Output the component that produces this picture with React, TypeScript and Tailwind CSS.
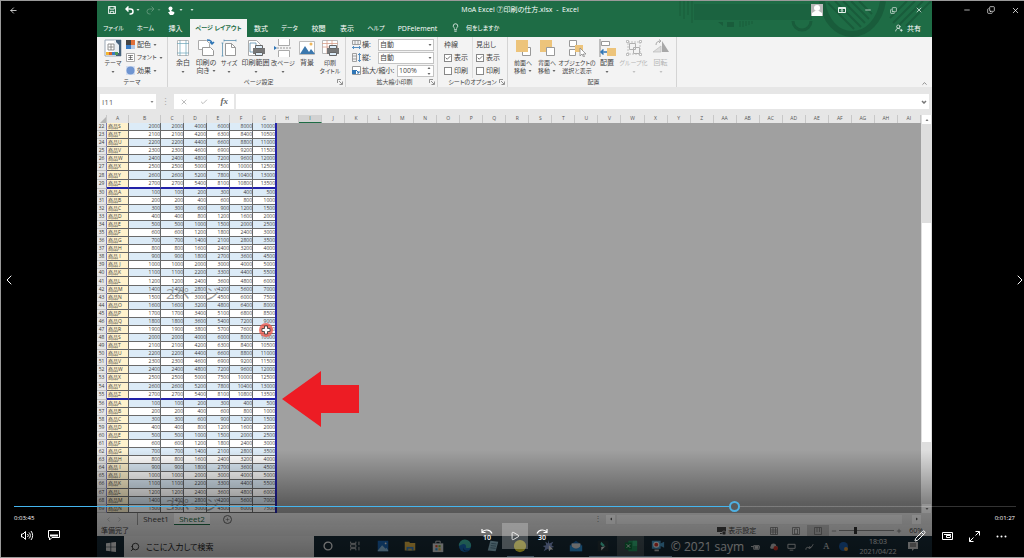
import { useState, type ReactNode } from 'react'
import clsx from 'clsx'
import {
  ArrowLeft,
  Check,
  ChevronLeft,
  ChevronRight,
  ChevronUp,
  Copy,
  Lightbulb,
  Minus,
  Pencil,
  Play,
  Plus,
  Search,
  UserRoundPlus,
  X,
} from 'lucide-react'

const tabs = [
  { name: 'ファイル', width: 'w-[33px]', small: true },
  { name: 'ホーム', width: 'w-[31px]', small: true },
  { name: '挿入', width: 'w-[29px]' },
  { name: 'ページ レイアウト', width: 'w-[57px]', active: true, small: true },
  { name: '数式', width: 'w-[28px]' },
  { name: 'データ', width: 'w-[29px]', small: true },
  { name: '校閲', width: 'w-[29px]' },
  { name: '表示', width: 'w-[28px]' },
  { name: 'ヘルプ', width: 'w-[30px]', small: true },
  { name: 'PDFelement', width: 'w-[53px]' },
]

const dataColumns = ['A', 'B', 'C', 'D', 'E', 'F', 'G']
const emptyColumns = [
  'H', 'I', 'J', 'K', 'L', 'M', 'N', 'O', 'P', 'Q', 'R', 'S', 'T', 'U',
  'V', 'W', 'X', 'Y', 'Z', 'AA', 'AB', 'AC', 'AD', 'AE', 'AF', 'AG', 'AH', 'AI',
]

// rows 22-69, the product list restarts at A on row 30 and row 56
const rows = Array.from({ length: 48 }, (_, i) => {
  const row = 22 + i
  const index = (row - 30 + 26) % 26
  const letter = String.fromCharCode(65 + index)
  const base = (index < 12 ? index + 1 : index + 2) * 100
  return {
    row,
    name: '商品' + (letter === 'I' || letter === 'J' ? ' ' : '') + letter,
    values: [base, base, base * 2, base * 3, base * 4, base * 5],
    last: letter === 'Z',
  }
})

function Caret({ className = '' }: { className?: string }) {
  return (
    <svg viewBox="0 0 4 2" className={clsx('h-[2px] w-[4px] shrink-0 fill-current opacity-80', className)}>
      <path d="M.5 0h3L2 2z" />
    </svg>
  )
}

function Launcher() {
  return (
    <svg viewBox="0 0 6 6" className="absolute right-[2px] bottom-[2px] size-[6px] fill-none stroke-[#777]">
      <path d="M.5 4V.5H4M2 2l3 3M5.5 2.5v3h-3" strokeWidth=".8" />
    </svg>
  )
}

function Group({ label, launcher, className, children }: { label: string; launcher?: boolean; className?: string; children: ReactNode }) {
  return (
    <section className={clsx('relative flex shrink-0 flex-col border-r border-[#d4d4d4]', className)}>
      <div className="flex h-[41px] shrink-0">{children}</div>
      <p className="text-center text-[6px] leading-[8px]">{label}</p>
      {launcher && <Launcher />}
    </section>
  )
}

type BigButtonProps = {
  lines: string[]
  caret?: boolean
  small?: boolean
  width: string
  disabled?: boolean
  children: ReactNode
}

function BigButton({ lines, caret, small, width, disabled, children }: BigButtonProps) {
  return (
    <button
      disabled={disabled}
      className={clsx('flex shrink-0 flex-col items-center whitespace-nowrap', width, small && 'text-[6px]', disabled && 'text-[#b5b5b5]')}
    >
      <svg viewBox="0 0 18 18" className="mt-[2px] mb-[2px] size-[18px] shrink-0" fill="none">
        {children}
      </svg>
      <span className="leading-[8px]">{lines[0]}</span>
      {lines[1] ? (
        <span className="flex items-center gap-[2px] leading-[8px]">
          {lines[1]}
          {caret && <Caret />}
        </span>
      ) : (
        caret && <Caret className="mt-[4px]" />
      )}
    </button>
  )
}

function SmallButton({ label, small, children }: { label: string; small?: boolean; children: ReactNode }) {
  return (
    <button className={clsx('flex h-[13px] items-center gap-[2px] whitespace-nowrap', small && 'text-[6px]')}>
      <svg viewBox="0 0 9 9" className="size-[9px]" fill="none">
        {children}
      </svg>
      {label}
      <Caret />
    </button>
  )
}

function CheckOption({ id, label, defaultChecked }: { id: string; label: string; defaultChecked?: boolean }) {
  return (
    <div className="flex h-[13px] items-center gap-[2px]">
      <span className="relative flex size-[8px]">
        <input id={id} type="checkbox" defaultChecked={defaultChecked} className="peer size-[8px] appearance-none border border-[#888] bg-white" />
        <Check className="absolute top-px left-px hidden size-[6px] text-[#444] peer-checked:block" strokeWidth={3} />
      </span>
      <label htmlFor={id}>{label}</label>
    </div>
  )
}

function ScaleIcon({ vertical }: { vertical?: boolean }) {
  return (
    <svg viewBox="0 0 9 9" className={clsx('size-[9px] shrink-0', vertical && '-rotate-90')} fill="none">
      <path d="M.5.5h8v4h-8zM3 .5v4M6 .5v4" stroke="#8a8a8a" strokeWidth=".8" />
      <path d="M.5 7.5h8M2 6 .5 7.5 2 9M7 6l1.5 1.5L7 9" stroke="#2f75b5" strokeWidth=".8" />
    </svg>
  )
}

function TitleBar() {
  return (
    <header className="relative h-[36px] shrink-0 overflow-hidden bg-[#1e6c45] text-white">
      <svg viewBox="0 0 260 36" className="absolute top-0 right-0 h-[36px] w-[260px]" fill="none" stroke="#195c3b">
        <path d="M8 0v15M12 0v18M16 0v14M20 0v22" strokeWidth="1" />
        <path d="M22 3h118v16H22z" fill="#1b6340" stroke="none" />
        <path d="M121 20a9 9 0 0 0 18 0" strokeWidth="3" />
        <path d="M55 21h7v5h-7zM46 21l5 4v-4z" fill="#195c3b" stroke="none" />
        <path d="M68 20v6M71 20v6M74 20v5M77 20v4M80 20v3" strokeWidth="1" />
        <path d="M150 0c3 20 15 33 30 33s28-13 31-33" strokeWidth="6" />
        <path d="M156 2l26 26M163 0l26 26M171 0l22 22M179 0l18 18M187 0l13 13" strokeWidth="2" />
        <path d="M218 17 235 0M221 22 243 0M226 25 251 0M234 25 259 0" strokeWidth="2" />
      </svg>
      <div className="relative flex h-[18px] items-center">
        <div className="flex flex-1 items-center gap-[6px] pl-[11px]">
          <button aria-label="save">
            <svg viewBox="0 0 9 9" className="size-[8px]" fill="none" stroke="#fff">
              <path d="M.5.5h8v8h-8zM2 .5v3h5v-3M2.5 8.5V6h4v2.5" />
            </svg>
          </button>
          <button aria-label="undo" className="ml-[3px] flex items-center gap-[2px]">
            <svg viewBox="0 0 9 9" className="size-[9px]" fill="none" stroke="#fff" strokeWidth="1.5">
              <path d="M3.5.5 1 3l2.5 2.5M1 3h4.500a2.500 2.500 0 0 1 0 5H4.500" />
            </svg>
            <Caret />
          </button>
          <button aria-label="redo" className="flex items-center gap-[2px] text-[#5d9577]">
            <svg viewBox="0 0 9 9" className="size-[9px]" fill="none" stroke="currentColor">
              <path d="M5.500.5 8 3 5.500 5.500M8 3H3.500a2.500 2.500 0 0 0 0 5h1" />
            </svg>
            <Caret />
          </button>
          <button aria-label="touch" className="flex items-center gap-[4px]">
            <svg viewBox="0 0 8 9" className="h-[9px] w-[8px]">
              <circle cx="3.5" cy="2.5" r="2" fill="#fff" />
              <path d="M2.700 2h1.600v3l3 1v1.500L6 9H3L1 6h1.700z" fill="#fff" />
            </svg>
            <Caret />
          </button>
          <Caret className="ml-[1px]" />
        </div>
        <h1 className="text-[7px] leading-[10px] whitespace-pre">MoA Excel ⑦印刷の仕方.xlsx  -  Excel</h1>
        <div className="flex flex-1 items-center justify-end">
          <span className="mr-[15px] flex size-[12px] items-end justify-center bg-[#b9b9b9]">
            <svg viewBox="0 0 12 12" className="size-[12px] fill-white">
              <circle cx="6" cy="4" r="3" />
              <path d="M1 12V9l3-2h4l3 2v3z" />
            </svg>
          </span>
          <svg viewBox="0 0 8 6" className="mr-[18px] h-[6px] w-[8px]" fill="none" stroke="#fff" strokeWidth=".9">
            <path d="M.5.5h7v5h-7zM.5 1.500h7M4 5V2.500M3 3.500l1-1 1 1" />
          </svg>
          <Minus className="mr-[18px] size-[8px]" />
          <Copy className="mr-[18px] size-[7px] -scale-x-100 rotate-180" />
          <X className="mr-[9px] size-[8px]" />
        </div>
      </div>
      <nav className="relative flex h-[18px] items-stretch">
        {tabs.map((tab) => (
          <button
            key={tab.name}
            className={clsx(
              'flex shrink-0 items-center justify-center whitespace-nowrap',
              tab.width,
              tab.small && 'text-[6px]',
              tab.active && 'bg-[#f3f3f3] font-semibold text-[#1e6c45]',
            )}
          >
            {tab.name}
          </button>
        ))}
        <Lightbulb className="mt-[4px] ml-[7px] size-[9px]" />
        <button className="ml-[6px] text-[6px] whitespace-nowrap">何をしますか</button>
        <button className="mr-[11px] ml-auto flex items-center gap-[4px]">
          <UserRoundPlus className="size-[8px]" />
          共有
        </button>
      </nav>
    </header>
  )
}

function Ribbon() {
  return (
    <div className="relative flex h-[50px] shrink-0 bg-[#f3f3f3] text-[#444]">
      <Group label="テーマ" className="w-[71px]">
        <div className="ml-[4px] flex w-[24px]">
          <BigButton lines={['テーマ']} caret small width="w-[24px]">
            <path d="M1 1h16v16H1z" fill="#fff" stroke="#9aa7b5" />
            <path d="M12 1h5v16h-5z" fill="#44617c" />
            <path d="m10 1 5 5v8h-5z" fill="#e9eef3" />
            <path d="M4 5h6M4 11h6M7 5v6M4.500 8h5M4 5v6M10 5v6" stroke="#777" strokeWidth=".8" />
            <path d="M2 13h3v3H2z" fill="#f2b632" />
            <path d="M5 13h3v3H5z" fill="#d9622b" />
            <path d="M8 13h3v3H8z" fill="#3b7cc4" />
            <path d="M11 13h3v3h-3z" fill="#4e9a57" />
          </BigButton>
        </div>
        <div className="ml-[1px] flex flex-col pt-[1px]">
          <SmallButton label="配色">
            <path d="M0 0h5v5H0z" fill="#444" />
            <path d="M5 0h4v5H5z" fill="#e0703a" />
            <path d="M0 5h5v4H0z" fill="#3b7cc4" />
            <path d="M5 5h4v4H5z" fill="#b4c8e4" />
          </SmallButton>
          <SmallButton label="フォント" small>
            <path d="M.5.5h8v8h-8z" fill="#fff" stroke="#aaa" />
            <path d="M2 2.500h5M2 6.500h5M4.500 2.500v4M2.500 4.500h4" stroke="#555" strokeWidth=".7" />
          </SmallButton>
          <SmallButton label="効果">
            <path d="M0 0h9v9H0z" fill="#d5dff0" />
            <circle cx="4.5" cy="4.5" r="4" fill="#6f95d1" />
          </SmallButton>
        </div>
      </Group>

      <Group label="ページ設定" launcher className="w-[178px] pl-[4px]">
        <BigButton lines={['余白']} caret width="w-[22px]">
          <path d="M3.500 1.500h11v15h-11z" fill="#fff" stroke="#bbb" />
          <path d="M6 1v16M12 1v16M3 4.500h12M3 14h12" stroke="#6ba5b8" strokeWidth=".7" />
        </BigButton>
        <BigButton lines={['印刷の', '向き']} caret width="w-[24px]">
          <path d="M1.500 1.500h8l3 3v6h-11z" fill="#fff" stroke="#aaa" />
          <path d="M5.500 8.500h8l3 3v5h-11z" fill="#fff" stroke="#999" />
          <path d="M10 1c4 0 5 1 5 4M13 3l2 2 2-2" stroke="#2f75b5" strokeWidth="1.5" />
        </BigButton>
        <BigButton lines={['サイズ']} caret small width="w-[22px]">
          <path d="M5.500 4.500h6l4 4v8h-10z" fill="#fff" stroke="#999" />
          <path d="M11.500 4.500v4h4" stroke="#999" />
          <path d="M4 1.500h12M2.500 4v13M4 .5v2M16 .5v2M1.500 4h2M1.500 17h2" stroke="#5a90b0" strokeWidth=".8" />
        </BigButton>
        <BigButton lines={['印刷範囲']} caret width="w-[31px]">
          <path d="M1.500 1.500h8l4 4v11h-12z" fill="#fff" stroke="#aaa" />
          <path d="M3 4h6v9H3z" stroke="#5a90b0" strokeWidth=".8" />
          <path d="M6 9h12v6H6z" fill="#777" />
          <path d="M8.500 6.500h7v3h-7zM8.500 13.500h7v3h-7z" fill="#dcecf8" stroke="#666" />
        </BigButton>
        <BigButton lines={['改ページ']} caret small width="w-[24px]">
          <path d="M4.500 0v6.500h11V0M4.500 18v-6.500h11V18" fill="#fff" stroke="#aaa" />
          <path d="M3 9h15" stroke="#999" strokeDasharray="2 1" />
          <path d="m0 7 3 2-3 2z" fill="#2f75b5" />
        </BigButton>
        <BigButton lines={['背景']} width="w-[24px]">
          <path d="M1.500 2.500h15v13h-15z" fill="#fff" stroke="#bbb" />
          <circle cx="13" cy="5" r="1.5" fill="#efb75b" />
          <path d="m2 15 5-8 4 6 2-3 4 5z" fill="#3b78ae" />
        </BigButton>
        <BigButton lines={['印刷', 'タイトル']} small width="w-[22px]">
          <path d="M1.500 1.500h15v13h-15z" fill="#fff" stroke="#bbb" />
          <path d="M1 4.500h16M1 8h16M6 1v14M11 1v14" stroke="#d8a08a" strokeWidth=".8" />
          <path d="M6 9h12v6H6z" fill="#777" />
          <path d="M8.500 6.500h7v3h-7zM8.500 13.500h7v3h-7z" fill="#dcecf8" stroke="#666" />
        </BigButton>
      </Group>

      <Group label="拡大縮小印刷" launcher className="w-[92px] pl-[6px]">
        <div className="flex w-[82px] flex-col pt-[1px]">
          <div className="flex h-[13px] items-center gap-[1px]">
            <ScaleIcon />
            <label htmlFor="fit-width" className="w-[15px]">横:</label>
            <span className="relative flex flex-1 items-center">
              <select id="fit-width" className="h-[12px] w-full appearance-none border border-[#c4c4c4] bg-white pl-px leading-[10px]">
                <option>自動</option>
              </select>
              <Caret className="absolute right-[2px]" />
            </span>
          </div>
          <div className="flex h-[13px] items-center gap-[1px]">
            <ScaleIcon vertical />
            <label htmlFor="fit-height" className="w-[15px]">縦:</label>
            <span className="relative flex flex-1 items-center">
              <select id="fit-height" className="h-[12px] w-full appearance-none border border-[#c4c4c4] bg-white pl-px leading-[10px]">
                <option>自動</option>
              </select>
              <Caret className="absolute right-[2px]" />
            </span>
          </div>
          <div className="flex h-[13px] items-center gap-[1px]">
            <svg viewBox="0 0 9 9" className="size-[9px] shrink-0" fill="none">
              <path d="M.5.5h8v8h-8z" fill="#fff" stroke="#999" />
              <path d="M0 4h4v4H0z" fill="#2f75b5" />
              <path d="m4 4 3 3M7 5v2H5" stroke="#2f75b5" />
            </svg>
            <label htmlFor="scale" className="w-[34px] whitespace-nowrap">拡大/縮小:</label>
            <span className="relative flex flex-1 items-center">
              <input id="scale" defaultValue="100%" className="h-[12px] w-full border border-[#c4c4c4] bg-white pl-px text-[7px]" />
              <span className="absolute right-[3px] flex flex-col gap-[4px]">
                <Caret className="rotate-180" />
                <Caret />
              </span>
            </span>
          </div>
        </div>
      </Group>

      <Group label="シートのオプション" launcher className="w-[70px]">
        <fieldset aria-label="枠線" className="ml-[6px] w-[29px] shrink-0 border-r border-[#ddd] pt-[1px]">
          <p className="flex h-[13px] items-center">枠線</p>
          <CheckOption id="lines-view" label="表示" defaultChecked />
          <CheckOption id="lines-print" label="印刷" />
        </fieldset>
        <fieldset aria-label="見出し" className="pt-[1px] pl-[3px] whitespace-nowrap">
          <p className="flex h-[13px] items-center">見出し</p>
          <CheckOption id="heads-view" label="表示" defaultChecked />
          <CheckOption id="heads-print" label="印刷" />
        </fieldset>
      </Group>

      <Group label="配置" className="w-[169px] pl-[3px]">
        <BigButton lines={['前面へ', '移動']} caret small width="w-[24px]">
          <path d="M8.500 8.500h8v8h-8z" fill="#fff" stroke="#999" />
          <path d="M2 1h12v12H2z" fill="#edc47b" />
        </BigButton>
        <BigButton lines={['背面へ', '移動']} caret small width="w-[24px]">
          <path d="M2 1h12v12H2z" fill="#edc47b" />
          <path d="M8.500 8.500h8v8h-8z" fill="#fff" stroke="#999" />
        </BigButton>
        <BigButton lines={['オブジェクトの', '選択と表示']} small width="w-[36px]">
          <path d="M1.500 1.500h7v6h-7zM1.500 10.500h6v6h-6z" fill="#fff" stroke="#999" />
          <path d="M7 6h8v7H7z" fill="#edc47b" />
          <path d="M12 9v8l2-2 1.500 3 1-.5-1.200-2.500H18z" fill="#fff" stroke="#888" strokeWidth=".8" />
        </BigButton>
        <BigButton lines={['配置']} caret width="w-[24px]">
          <path d="M2 0v18" stroke="#888" />
          <path d="M3.500 2.500h8v4h-8z" fill="#fff" stroke="#999" />
          <path d="M9 9h9v8H9z" fill="#edc47b" />
          <path d="M9 13H3M5.500 10.500 3 13l2.500 2.500" stroke="#2f75b5" strokeWidth="1.5" />
        </BigButton>
        <BigButton lines={['グループ化']} caret small width="w-[29px]" disabled>
          <path d="M3 3h12v12H3z" stroke="#c0c0c0" strokeDasharray="2 1" />
          <path d="M4.500 4.500h6v6h-6zM8.500 8.500h6v6h-6z" fill="#f3f3f3" stroke="#b0b0b0" />
          <path d="M1.500 1.500h2v2h-2zM14.500 1.500h2v2h-2zM1.500 14.500h2v2h-2zM14.500 14.500h2v2h-2z" fill="#fff" stroke="#b0b0b0" strokeWidth=".8" />
        </BigButton>
        <BigButton lines={['回転']} caret width="w-[25px]" disabled>
          <path d="m1 13 8-6v6z" fill="#ddd" stroke="#bbb" strokeWidth=".7" />
          <path d="m10 2 7 11h-7z" fill="#a8a8a8" />
          <path d="M4 6c0-3 2-4 5-4M7 .5 9 2 7 4" stroke="#aaa" />
        </BigButton>
      </Group>
      <ChevronUp className="absolute right-[4px] bottom-0 size-[7px]" />
    </div>
  )
}

function FormulaBar() {
  return (
    <div className="flex h-[28px] shrink-0 items-start bg-[#e6e6e6] px-[3px] pt-[7px] text-[#666]">
      <span className="relative flex h-[15px] w-[56px] items-center">
        <input aria-label="名前ボックス" defaultValue="I11" className="h-full w-full bg-white pl-[2px] text-[8px]" />
        <Caret className="absolute right-[2px]" />
      </span>
      <span className="flex h-[15px] w-[18px] items-center justify-center text-[9px] text-[#aaa]">⋮</span>
      <div className="flex h-[15px] w-[60px] items-center justify-around bg-white">
        <X className="size-[8px] text-[#999]" />
        <Check className="size-[8px] text-[#999]" />
        <i className="font-['Liberation_Serif',serif] text-[9px] font-bold">fx</i>
      </div>
      <span className="relative ml-[2px] flex h-[15px] flex-1 items-center">
        <input aria-label="数式バー" className="h-full w-full bg-white" />
        <svg viewBox="0 0 6 4" className="absolute right-[2px] h-[4px] w-[6px]" fill="none" stroke="#777" strokeWidth="1.5">
          <path d="m1 1 2 2 2-2" />
        </svg>
      </span>
    </div>
  )
}

function Sheet() {
  return (
    <div className="flex min-h-0 flex-1 bg-[#e6e6e6] text-[5px]">
      <div className="flex min-w-0 flex-1 flex-col">
        <div className="flex h-[8px] shrink-0 leading-[7px] text-[#555]">
          <span className="flex w-[10px] items-end justify-end border-r border-[#c8c8c8]">
            <svg viewBox="0 0 6 6" className="size-[6px] fill-[#b5b5b5]">
              <path d="M6 0v6H0z" />
            </svg>
          </span>
          {dataColumns.map((name) => (
            <span
              key={name}
              className={clsx('border-r border-[#c8c8c8] text-center', name === 'A' ? 'w-[22px]' : name === 'B' ? 'w-[32px]' : 'w-[23px]')}
            >
              {name}
            </span>
          ))}
          {emptyColumns.map((name) => (
            <span
              key={name}
              className={clsx(
                'min-w-0 flex-1 border-r border-[#c8c8c8] text-center',
                name === 'I' && 'border-b border-b-[#1e6c45] bg-[#d2d2d2] text-[#1e6c45]',
              )}
            >
              {name}
            </span>
          ))}
        </div>
        <div className="relative min-h-0 flex-1 overflow-hidden bg-[#a0a0a0]">
          <table className="h-[390px] w-[180px] table-fixed border-separate border-spacing-0 border-r-2 border-[#2222a8] leading-[7px] text-[#3c3c3c]">
            <colgroup>
              <col className="w-[10px]" />
              <col className="w-[22px]" />
              <col className="w-[32px]" />
              <col className="w-[23px]" />
              <col className="w-[23px]" />
              <col className="w-[23px]" />
              <col className="w-[23px]" />
              <col className="w-[22px]" />
            </colgroup>
            <tbody>
              {rows.map((r) => (
                <tr key={r.row} className={r.row % 2 === 0 ? 'bg-[#dcebf7]' : 'bg-white'}>
                  <th className="border-r border-b border-r-[#7c7cb8] border-b-[#c0c0c0] bg-[#e6e6e6] p-0 text-center font-normal">{r.row}</th>
                  <td
                    className={clsx(
                      'border-r border-b border-[#666] bg-[#fff2cc] p-0 pl-px whitespace-nowrap',
                      r.last && 'border-b-2 border-b-[#2222a8]',
                    )}
                  >
                    {r.name}
                  </td>
                  {r.values.map((value, i) => (
                    <td
                      key={i}
                      className={clsx('border-b border-[#6a6a6a] p-0 text-right', i < 5 && 'border-r', r.last && 'border-b-2 border-b-[#2222a8]')}
                    >
                      {value}
                    </td>
                  ))}
                </tr>
              ))}
            </tbody>
          </table>
          {/* page watermarks */}
          <span className="absolute top-[160px] left-[69px] text-[15px] leading-[20px] whitespace-nowrap text-[#777]/70">2ページ</span>
          <span className="absolute top-[371px] left-[69px] text-[15px] leading-[20px] whitespace-nowrap text-[#777]/70">3ページ</span>
          {/* click marker with the cell cursor */}
          <svg viewBox="0 0 16 16" className="absolute top-[199px] left-[161px] size-[16px]">
            <circle cx="8" cy="8" r="7" fill="#ee5a4f" fillOpacity=".8" />
            <path d="M6.500 4h3v2.500H12v3H9.500V12h-3V9.500H4v-3h2.500z" fill="#fff" stroke="#333" strokeWidth=".8" />
          </svg>
          <svg viewBox="0 0 78 56" className="absolute top-[248px] left-[185px] h-[56px] w-[78px] fill-[#ed1c24]">
            <path d="M0 28 39 0v14h38v28H39v14z" />
          </svg>
        </div>
      </div>
      <div className="flex w-[11px] flex-col items-center bg-[#dedede] text-[#555]">
        <span className="flex h-[9px] w-[9px] items-center justify-center bg-white">
          <Caret className="rotate-180" />
        </span>
        <span className="mt-[99px] h-[219px] w-[9px] bg-white" />
        <span className="mt-auto flex h-[9px] w-[9px] items-center justify-center bg-white">
          <Caret />
        </span>
      </div>
    </div>
  )
}

function SheetBar() {
  return (
    <div className="flex h-[12px] shrink-0 items-stretch bg-[#e6e6e6] text-[8px] leading-[10px] text-[#444]">
      <div className="flex w-[41px] items-center gap-[4px] border-r border-[#999] pl-[8px] text-[#999]">
        <ChevronLeft className="size-[7px]" />
        <ChevronRight className="size-[7px]" />
      </div>
      <button className="w-[36px]">Sheet1</button>
      <button className="w-[36px] border-b border-[#1e6c45] bg-white text-[#1e6c45]">Sheet2</button>
      <button aria-label="新しいシート" className="ml-[13px] flex size-[9px] items-center justify-center self-center rounded-full border border-[#666]">
        <Plus className="size-[5px]" />
      </button>
      <span className="mr-[4px] ml-auto text-[#888]">⋮</span>
      <div className="flex w-[39%] items-center gap-[2px] text-[#333]">
        <span className="flex size-[9px] items-center justify-center bg-white">
          <Caret className="rotate-90" />
        </span>
        <span className="h-[9px] flex-1 bg-[#f6f6f6]" />
        <span className="mr-[11px] ml-[8px] flex size-[9px] items-center justify-center bg-white">
          <Caret className="-rotate-90" />
        </span>
      </div>
    </div>
  )
}

function StatusBar() {
  return (
    <div className="flex h-[11px] shrink-0 items-center bg-[#e9e9e9] pl-[4px] text-[7px] text-[#444]">
      <span>準備完了</span>
      <span className="ml-auto flex items-center gap-[2px]">
        <svg viewBox="0 0 9 8" className="h-[8px] w-[9px]">
          <path d="M0 0h9v5H0zM3 6h3v1H3z" fill="#444" />
          <circle cx="7" cy="6" r="2" fill="#444" stroke="#e9e9e9" strokeWidth=".6" />
        </svg>
        表示設定
      </span>
      <span className="ml-[7px] flex h-full">
        {['標準', 'ページ レイアウト', '改ページ プレビュー'].map((name, i) => (
          <button key={name} aria-label={name} className={clsx('flex h-full w-[22px] items-center justify-center', i === 2 && 'bg-[#c4c4c4]')}>
            <svg viewBox="0 0 8 8" className="size-[8px]" fill="none" stroke="#777">
              <path
                d={
                  i === 0
                    ? 'M.5.5h7v7h-7zM.5 3h7M.5 5h7M3 .5v7M5.500.5v7'
                    : i === 1
                      ? 'M.5.5h7v7h-7zM2.500 2h3v5h-3z'
                      : 'M.5.5h7v7h-7zM3 .5V5M5.500.5V5'
                }
                strokeWidth=".8"
              />
            </svg>
          </button>
        ))}
      </span>
      <Minus className="ml-[2px] size-[6px]" />
      <span className="relative mx-[2px] flex h-[8px] w-[55px] items-center">
        <span className="h-px w-full bg-[#888]" />
        <span className="absolute left-[15px] h-[7px] w-[3px] bg-[#333]" />
      </span>
      <Plus className="size-[6px]" />
      <span className="mr-[9px] ml-[7px]">60%</span>
    </div>
  )
}

const taskIcons: { name: string; open?: boolean; active?: boolean; icon: ReactNode }[] = [
  { name: 'Cortana', icon: <circle cx="8" cy="8" r="4.5" fill="none" stroke="#fff" strokeWidth="1.5" /> },
  { name: 'タスク ビュー', icon: <path d="M3 3v2h6V3M3 13v-2h6v2M3 6.500h6v3H3zM12.500 3v4M12.500 9v4" fill="none" stroke="#ddd" /> },
  {
    name: 'フォト',
    icon: (
      <>
        <path d="M2 2h12v12H2z" fill="#1d6fc4" />
        <path d="m2 13 5-6 4 4 1-1 2 3v1H2z" fill="#9fd3f7" />
        <circle cx="11" cy="5" r="1" fill="#fff" />
      </>
    ),
  },
  {
    name: 'エクスプローラー',
    icon: (
      <>
        <path d="M2 3h5l1 1.500h6V13H2z" fill="#f3c14b" />
        <path d="M4 9h8v4H4z" fill="#3f8fd8" />
        <path d="M6 11h4v2H6z" fill="#f3c14b" />
      </>
    ),
  },
  {
    name: 'Store',
    icon: (
      <>
        <path d="M5.500 5V2.500h5V5" fill="none" stroke="#eee" />
        <path d="M2 5h12v10H2z" fill="#eee" />
        <path d="M5 7h2.500v2.500H5z" fill="#e5532d" />
        <path d="M8.500 7H11v2.500H8.500z" fill="#7cba2d" />
        <path d="M5 10.500h2.500V13H5z" fill="#2d9fe5" />
        <path d="M8.500 10.500H11V13H8.500z" fill="#f5bc2d" />
      </>
    ),
  },
  {
    name: 'Edge',
    icon: (
      <>
        <circle cx="8" cy="8" r="7" fill="#1976c9" />
        <path d="M1 8a7 7 0 0 1 14-1c0 3-3 4-6 3 1-3-1-5-4-4s-3 2-4 2z" fill="#43c6b4" />
        <path d="M6 9c0 3 3 5 7 4-4 3-8 1-7-4z" fill="#0c3f78" />
      </>
    ),
  },
  {
    name: 'メモ帳',
    icon: (
      <>
        <path d="m5 2 9 1-3 11-9-1z" fill="#9cc9dc" />
        <path d="m6 5 6 .7M5.500 7.500l6 .7M5 10l6 .7" stroke="#527f95" />
      </>
    ),
  },
  { name: 'マーカー', open: true, icon: <circle cx="8" cy="8" r="7" fill="#fff23a" /> },
  {
    name: 'スター',
    icon: (
      <>
        <path d="m8 1 1.500 4L14 3l-2 4 3 2-4 1-1 4-2-3-5 3 2-4-3-2 4-1-1-4 3 2z" fill="#8fa5dd" />
        <path d="M9 7v7l2-2h3z" fill="#fff" />
      </>
    ),
  },
  {
    name: 'メール',
    icon: (
      <>
        <path d="m1 7 7-5 7 5v7H1z" fill="#1668b4" />
        <path d="M3 5h10v6H3z" fill="#eee" />
        <path d="m1 7 7 5 7-5v7H1z" fill="#2fa0ed" />
      </>
    ),
  },
  {
    name: 'Filmora',
    open: true,
    icon: (
      <>
        <path d="M2 2h12v12H2z" fill="#26343a" />
        <path d="m6 3 4 4-2 2-3-3z" fill="#53e3c1" />
        <path d="m8 9 3-1-5 5V9z" fill="#eee" />
      </>
    ),
  },
  {
    name: 'Excel',
    open: true,
    active: true,
    icon: (
      <>
        <path d="M5 2h10v12H5z" fill="#24a366" />
        <path d="M10 2h5v6h-5z" fill="#39c283" />
        <path d="M1 4h8v8H1z" fill="#0f7a41" />
        <path d="m3 6 4 4M7 6l-4 4" stroke="#fff" />
      </>
    ),
  },
  {
    name: 'レコーダー',
    open: true,
    icon: (
      <>
        <path d="M1 2h10v9H1zM11 5l4-2v7l-4-2z" fill="#4fa7d8" />
        <circle cx="6" cy="6.500" r="3.5" fill="#fff" />
        <circle cx="6" cy="6.500" r="2.2" fill="#e2382c" />
        <path d="M4 13h5" stroke="#ccc" strokeWidth="2" />
      </>
    ),
  },
]

function TaskBar() {
  return (
    <footer className="relative flex h-[21px] shrink-0 bg-[#182c38] text-[#e8e8e8]">
      <button aria-label="スタート" className="flex w-[27px] items-center justify-center">
        <svg viewBox="0 0 10 10" className="size-[10px] fill-[#eee]">
          <path d="M0 1.300 4.500.7v4H0zM5.200.6 10 0v4.700H5.200zM0 5.300h4.500v4L0 8.700zM5.200 5.300H10V10l-4.800-.6z" />
        </svg>
      </button>
      <label className="flex w-[190px] items-center gap-[6px] bg-[#f1f1f1] pl-[6px] text-[#222]">
        <Search className="size-[10px] -scale-x-100" />
        <input
          placeholder="ここに入力して検索"
          aria-label="検索"
          className="w-[120px] bg-transparent text-[8px] placeholder:text-[#222]"
        />
      </label>
      <div className="flex w-[358px]">
        {taskIcons.map((app) => (
          <button
            key={app.name}
            aria-label={app.name}
            className={clsx(
              'flex flex-1 items-center justify-center border-b',
              app.open ? 'border-[#9fc9ea]' : 'border-transparent',
              app.active && 'bg-[#46555c]',
            )}
          >
            <svg viewBox="0 0 16 16" className="size-[14px]">
              {app.icon}
            </svg>
          </button>
        ))}
      </div>
      <div className="ml-auto flex items-center gap-[9px] pr-[14px]">
        <svg viewBox="0 0 10 8" className="h-[8px] w-[9px]" fill="none" stroke="#ddd">
          <path d="M3 2.500h6v4H3zM0 3.500h3M9 4h1" />
          <path d="M4 3h4v3H4z" fill="#ddd" stroke="none" />
        </svg>
        <svg viewBox="0 0 10 8" className="h-[8px] w-[9px]">
          <path d="M2 6a2 2 0 0 1 0-3 3 3 0 0 1 6 0c2 0 2 3 0 3z" fill="#ccc" />
          <circle cx="7.5" cy="5.5" r="2.5" fill="#d6362b" />
        </svg>
        <svg viewBox="0 0 10 8" className="h-[8px] w-[9px]" fill="none" stroke="#ddd">
          <path d="M1 1h8v4.500H1zM3 7.500h4" />
        </svg>
        <svg viewBox="0 0 10 8" className="h-[8px] w-[9px]" fill="none" stroke="#ddd">
          <path d="M1 7c0-3 2-3 3-2s3 0 2-1-3 1-1 1 3-2 4-4" />
        </svg>
        <span className="w-[7px] font-['Liberation_Serif',serif] text-[9px]">A</span>
        <svg viewBox="0 0 9 9" className="size-[9px]">
          <circle cx="4.5" cy="4.5" r="4.5" fill="#1e63b5" />
          <circle cx="7" cy="7" r="2" fill="#eda23c" />
        </svg>
        <span className="flex w-[42px] flex-col items-center text-[7px] leading-[10px]">
          <span>18:03</span>
          <span>2021/04/22</span>
        </span>
        <svg viewBox="0 0 10 10" className="size-[10px] fill-[#ddd]">
          <path d="M0 0h10v7H6L4 9V7H0z" />
          <path d="M2 2h6M2 4h6" stroke="#555" />
        </svg>
      </div>
    </footer>
  )
}

function SkipIcon({ seconds, forward }: { seconds: number; forward?: boolean }) {
  return (
    <span className="relative flex h-[13px] w-[13px] items-end justify-center text-[7px] leading-[8px] font-semibold">
      <svg viewBox="0 0 12 6" className={clsx('absolute top-0 h-[6px] w-[12px]', forward && '-scale-x-100')} fill="none" stroke="#fff">
        <path d="M1 0v3.500h3.500M1 3.500C3 0 9 0 11 4.500" strokeWidth="1.2" />
      </svg>
      {seconds}
    </span>
  )
}

function Player() {
  const [seconds, setSeconds] = useState(225)
  const length = 312

  return (
    <div className="absolute inset-0 flex flex-col text-white">
      <div className="flex h-[18px] items-center justify-between pr-[4px] pl-[8px]">
        <button aria-label="戻る">
          <ArrowLeft className="size-[9px]" />
        </button>
        <div className="flex gap-[16px]">
          <Minus className="size-[8px]" />
          <Copy className="size-[8px] -scale-x-100 rotate-180" />
          <X className="size-[9px]" />
        </div>
      </div>
      <div className="flex flex-1 items-center justify-between pt-[90px]">
        <button aria-label="前へ">
          <ChevronLeft className="size-[16px]" strokeWidth={1.5} />
        </button>
        <button aria-label="次へ" className="-mr-[4px]">
          <ChevronRight className="size-[16px]" strokeWidth={1.5} />
        </button>
      </div>
      <div className="bg-linear-to-b from-transparent via-black/42 to-black/60 pt-[51px]">
        <div className="mr-[8px] ml-[13px] flex">
          <input
            type="range"
            aria-label="シーク"
            min={0}
            max={length}
            value={seconds}
            onChange={(e) => setSeconds(Number(e.target.value))}
            style={{
              backgroundImage: `linear-gradient(to right, #45b5ee ${(seconds / length) * 100}%, #ffffff33 0)`,
            }}
            className="h-[11px] w-full appearance-none bg-size-[100%_1px] bg-center bg-no-repeat [&::-webkit-slider-thumb]:size-[11px] [&::-webkit-slider-thumb]:appearance-none [&::-webkit-slider-thumb]:rounded-full [&::-webkit-slider-thumb]:border-2 [&::-webkit-slider-thumb]:border-[#4fb0e2] [&::-webkit-slider-thumb]:bg-[#5a5a5a]"
          />
        </div>
        <div className="flex h-[11px] items-end justify-between pr-[9px] pl-[13px] text-[6px] leading-[10px]">
          <span>0:03:45</span>
          <span>0:01:27</span>
        </div>
        <div className="grid h-[34px] grid-cols-3 items-start">
          <div className="flex items-center gap-[14px] pt-[7px] pl-[20px]">
            <button aria-label="音量">
              <svg viewBox="0 0 13 11" className="h-[11px] w-[13px]" fill="none" stroke="#fff">
                <path d="M.5 4v3h1.500l2.500 2.500v-8L2 4zM6.500 4a2 2 0 0 1 0 3M8 2.500a4 4 0 0 1 0 6M10 1a7 7 0 0 1 0 9" />
              </svg>
            </button>
            <button aria-label="字幕">
              <svg viewBox="0 0 12 11" className="h-[11px] w-[12px]" fill="none" stroke="#fff">
                <path d="M.5.5h11v7H4L1.500 10V7.500h-1z" />
                <path d="M2 5.500h8" strokeWidth="2" />
              </svg>
            </button>
          </div>
          <div className="flex items-start justify-center gap-[8px] pl-[4px]">
            <button aria-label="10秒戻る" className="mt-[6px]">
              <SkipIcon seconds={10} />
            </button>
            <button aria-label="再生" className="flex size-[26px] items-center justify-center bg-white/25">
              <Play className="size-[10px]" strokeWidth={2} />
            </button>
            <button aria-label="30秒進む" className="mt-[6px]">
              <SkipIcon seconds={30} forward />
            </button>
          </div>
          <div className="flex items-center justify-end gap-[16px] pt-[7px] pr-[17px]">
            <button aria-label="編集">
              <Pencil className="size-[12px]" />
            </button>
            <button aria-label="ミニ ビュー">
              <svg viewBox="0 0 11 8" className="h-[8px] w-[11px]" fill="none" stroke="#fff">
                <path d="M.5.5h10v7H.5zM2 2.500h7" />
                <path d="M4.500 3.500h4v2h-4z" />
              </svg>
            </button>
            <button aria-label="全画面表示">
              <svg viewBox="0 0 11 11" className="size-[11px]" fill="none" stroke="#fff">
                <path d="M6.500.5h4v4M10.500.5l-4 4M4.500 10.500h-4v-4M.5 10.500l4-4" />
              </svg>
            </button>
            <button aria-label="その他">
              <svg viewBox="0 0 11 3" className="h-[3px] w-[11px] fill-white">
                <circle cx="1.5" cy="1.5" r="1" />
                <circle cx="5.5" cy="1.5" r="1" />
                <circle cx="9.5" cy="1.5" r="1" />
              </svg>
            </button>
          </div>
        </div>
      </div>
    </div>
  )
}

export default function App() {
  return (
    <main className="relative flex h-screen min-h-[540px] flex-col overflow-hidden border border-r-0 border-[#9a9a9a] bg-black pr-[92px] pl-[96px] font-['Open_Sans','Noto_Sans_CJK_JP',sans-serif] text-[7px] leading-[9px] [font-feature-settings:'palt']">
      <div className="relative flex min-h-0 flex-1 flex-col">
        <TitleBar />
        <Ribbon />
        <FormulaBar />
        <Sheet />
        <SheetBar />
        <StatusBar />
        <TaskBar />
        <span className="absolute right-[188px] bottom-[2px] text-[12px] leading-[16px] text-[#e8e8e8]">© 2021 saym</span>
      </div>
      <Player />
    </main>
  )
}
